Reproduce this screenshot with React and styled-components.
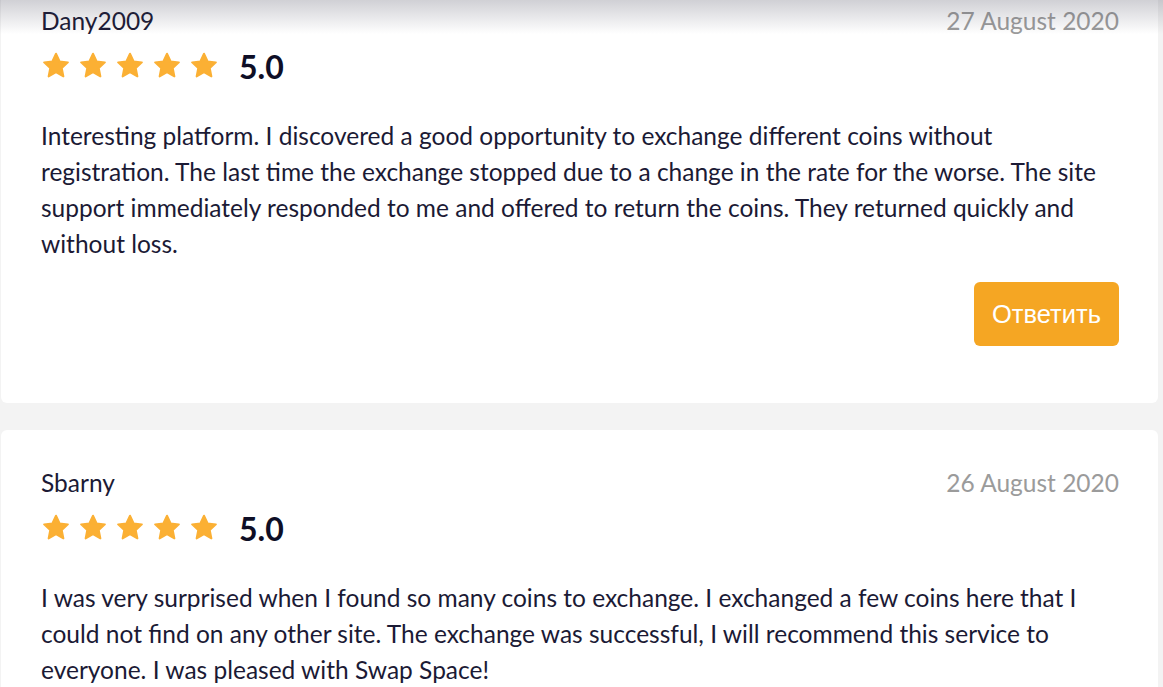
import React from "react";
import styled, { createGlobalStyle } from "styled-components";

const GlobalStyle = createGlobalStyle`
  html, body {
    margin: 0;
    padding: 0;
    background: #f3f3f3;
    font-family: Lato, "Noto Sans", sans-serif;
    color: #1b1a35;
    overflow: hidden;
  }
`;

const Page = styled.div`
  position: relative;
  height: 687px;
  overflow: hidden;
`;

const TopShade = styled.div`
  position: absolute;
  top: 0;
  left: 0;
  right: 0;
  height: 34px;
  background: linear-gradient(to bottom, rgba(60, 60, 80, 0.24), rgba(255, 255, 255, 0));
  pointer-events: none;
`;

const List = styled.div`
  display: flex;
  flex-direction: column;
  gap: 27px;
  margin-top: -32px;
  padding: 0 5px 0 1px;
`;

const Card = styled.div`
  background: #fff;
  border-radius: 6px;
  padding: 37px 39px 57px 40px;
  display: flex;
  flex-direction: column;
`;

const Header = styled.div`
  display: flex;
  justify-content: space-between;
  align-items: center;
  height: 30px;
`;

const Name = styled.div`
  font-size: 24.5px;
`;

const Date = styled.div`
  font-size: 24.5px;
  color: #9b9b9b;
`;

const Rating = styled.div`
  display: flex;
  align-items: center;
  gap: 7px;
  height: 32px;
  margin-top: 15px;
`;

const Score = styled.span`
  font-size: 32px;
  font-weight: 700;
  margin-left: 13px;
  color: #0e0e26;
`;

const Text = styled.p`
  margin: 36px 0 0;
  font-size: 24.5px;
  line-height: 36px;
`;

const Actions = styled.div`
  display: flex;
  justify-content: flex-end;
  margin-top: 20px;
`;

const ReplyButton = styled.button`
  width: 145px;
  height: 64px;
  border: none;
  border-radius: 6px;
  background: #f5a623;
  color: #fff;
  font-family: "Liberation Sans", Arial, sans-serif;
  font-size: 25.5px;
  cursor: pointer;
`;

const Star = () => (
  <svg width="30" height="30" viewBox="0 0 24 24">
    <path
      d="M12 2.2l2.9 6.1 6.6.8-4.9 4.6 1.3 6.6L12 17l-5.9 3.3 1.3-6.6-4.9-4.6 6.6-.8z"
      fill="#fbb034"
      stroke="#fbb034"
      strokeWidth="1.6"
      strokeLinejoin="round"
    />
  </svg>
);

const reviews = [
  {
    name: "Dany2009",
    date: "27 August 2020",
    text: "Interesting platform. I discovered a good opportunity to exchange different coins without registration. The last time the exchange stopped due to a change in the rate for the worse. The site support immediately responded to me and offered to return the coins. They returned quickly and without loss.",
    reply: true,
  },
  {
    name: "Sbarny",
    date: "26 August 2020",
    text: "I was very surprised when I found so many coins to exchange. I exchanged a few coins here that I could not find on any other site. The exchange was successful, I will recommend this service to everyone. I was pleased with Swap Space!",
    reply: false,
  },
];

const Review = ({ name, date, text, reply }) => (
  <Card>
    <Header>
      <Name>{name}</Name>
      <Date>{date}</Date>
    </Header>
    <Rating>
      {[0, 1, 2, 3, 4].map((i) => (
        <Star key={i} />
      ))}
      <Score>5.0</Score>
    </Rating>
    <Text>{text}</Text>
    {reply && (
      <Actions>
        <ReplyButton>Ответить</ReplyButton>
      </Actions>
    )}
  </Card>
);

export default function App() {
  return (
    <Page>
      <GlobalStyle />
      <List>
        {reviews.map((r) => (
          <Review key={r.name} {...r} />
        ))}
      </List>
      <TopShade />
    </Page>
  );
}
